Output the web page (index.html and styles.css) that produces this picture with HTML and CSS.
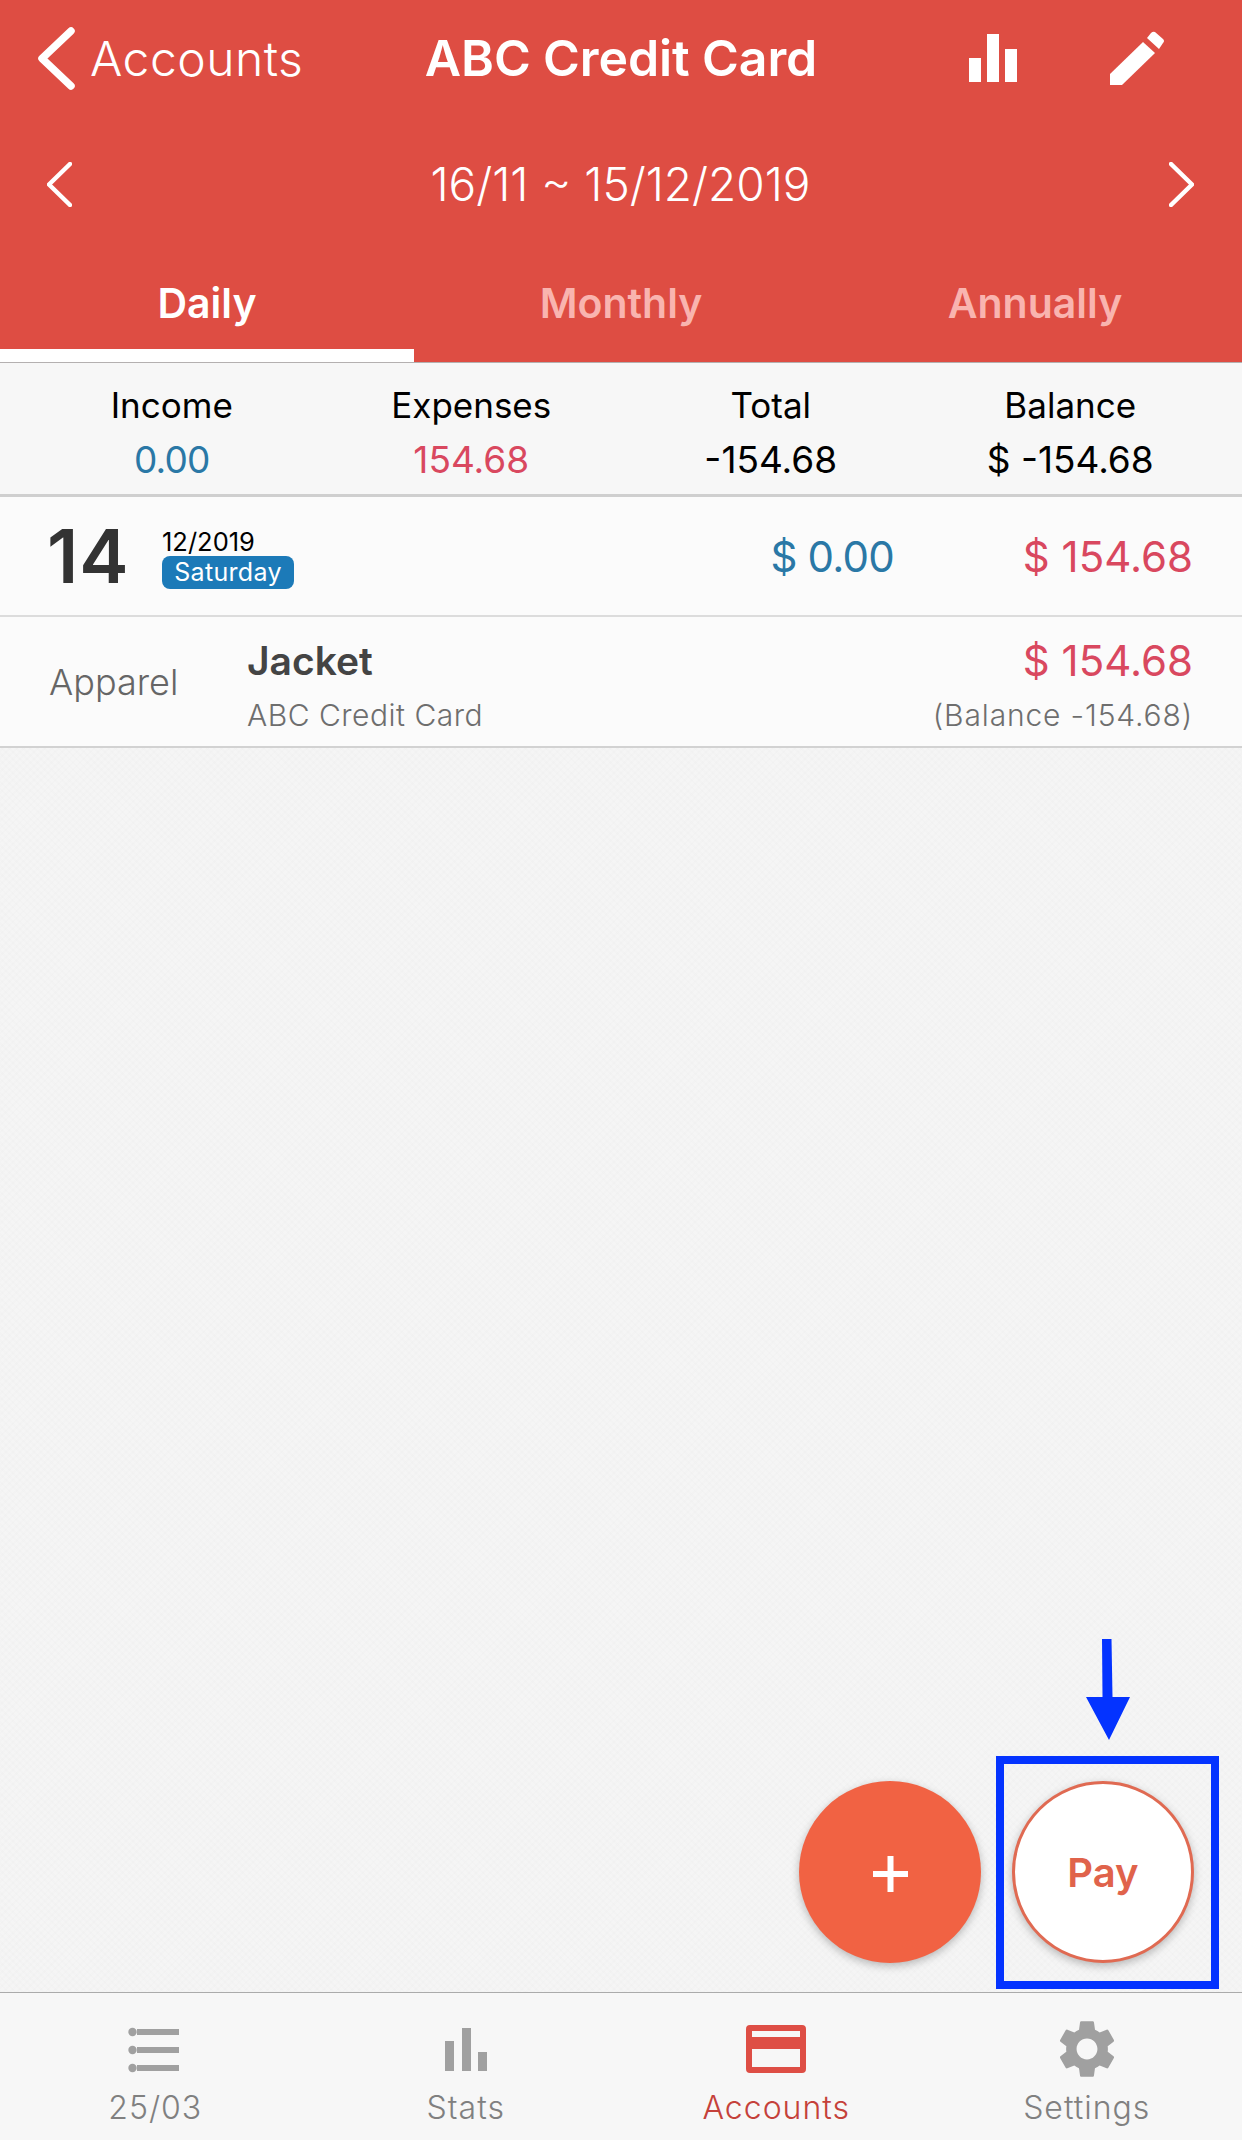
FILE: index.html
```html
<!DOCTYPE html>
<html lang="en">
<head>

    <meta charset="utf-8">

    <title>ABC Credit Card</title>

    <link rel="stylesheet" href="styles.css">

</head>
<body>

    <div class="screen">

        <header class="header">

            <div class="nav">
                <div class="nav_back">
                    <svg class="back_icon" viewBox="0 0 37 63"><path d="M33 4 L4 31.5 L33 59"/></svg>
                    <span>Accounts</span>
                </div>
                <div class="nav_title">ABC Credit Card</div>
                <div class="nav_actions">
                    <svg class="chart_icon" viewBox="0 0 48 48">
                        <rect x="0" y="24" width="12" height="24"/>
                        <rect x="18" y="0" width="12" height="48"/>
                        <rect x="36" y="15" width="12" height="33"/>
                    </svg>
                    <svg class="pencil_icon" viewBox="0 0 54 54">
                        <path d="M0 43 L33 11 L45 22 L12 54 L0 54 Z"/>
                        <path d="M37 7 L41 2 Q43 0 45 1 L53 8 Q55 10 53 12 L49 18 Z"/>
                    </svg>
                </div>
            </div>

            <div class="period">
                <svg class="period_icon" viewBox="0 0 25 45"><path d="M23 2 L2 22.5 L23 43"/></svg>
                <span>16/11 ~ 15/12/2019</span>
                <svg class="period_icon" viewBox="0 0 25 45"><path d="M2 2 L23 22.5 L2 43"/></svg>
            </div>

            <div class="tabs">
                <div class="tab tab_active">Daily</div>
                <div class="tab">Monthly</div>
                <div class="tab">Annually</div>
            </div>

        </header>

        <section class="summary">
            <div class="summary_col">
                <div>Income</div>
                <div class="summary_val summary_zero blue">0.00</div>
            </div>
            <div class="summary_col">
                <div>Expenses</div>
                <div class="summary_val red">154.68</div>
            </div>
            <div class="summary_col">
                <div>Total</div>
                <div class="summary_val">-154.68</div>
            </div>
            <div class="summary_col">
                <div>Balance</div>
                <div class="summary_val">$ -154.68</div>
            </div>
        </section>

        <section class="day">
            <div class="day_num">14</div>
            <div class="day_info">
                <div class="day_month">12/2019</div>
                <div class="day_name">Saturday</div>
            </div>
            <div class="day_income blue">$ 0.00</div>
            <div class="day_expense red">$ 154.68</div>
        </section>

        <section class="item">
            <div class="item_cat">Apparel</div>
            <div class="item_main">
                <div class="item_title">Jacket</div>
                <div class="item_sub">ABC Credit Card</div>
            </div>
            <div class="item_amounts">
                <div class="item_price red">$ 154.68</div>
                <div class="item_sub item_balance">(Balance -154.68)</div>
            </div>
        </section>

        <main class="empty"></main>

        <nav class="bottom">
            <div class="bottom_tab">
                <svg class="bottom_icon" viewBox="0 0 60 60">
                    <circle cx="7.5" cy="12" r="4.2"/>
                    <circle cx="7.5" cy="30" r="4.2"/>
                    <circle cx="7.5" cy="48" r="4.2"/>
                    <rect x="12" y="9" width="42" height="6"/>
                    <rect x="12" y="27" width="42" height="6"/>
                    <rect x="12" y="45" width="42" height="6"/>
                </svg>
                <span>25/03</span>
            </div>
            <div class="bottom_tab">
                <svg class="bottom_icon" viewBox="0 0 60 60">
                    <rect x="9" y="21" width="9" height="30"/>
                    <rect x="26" y="8" width="9" height="43"/>
                    <rect x="42" y="32" width="9" height="19"/>
                </svg>
                <span>Stats</span>
            </div>
            <div class="bottom_tab bottom_active">
                <svg class="bottom_icon" viewBox="0 0 60 60">
                    <path fill-rule="evenodd" d="M4 5 H56 Q60 5 60 9 V49 Q60 53 56 53 H4 Q0 53 0 49 V9 Q0 5 4 5 Z M6 11 V17 H54 V11 Z M6 29 V47 H54 V29 Z"/>
                </svg>
                <span>Accounts</span>
            </div>
            <div class="bottom_tab">
                <svg class="bottom_icon" viewBox="0 0 60 60">
                    <g transform="translate(-4.8 -5.8) scale(2.9)">
                        <path d="M19.14 12.94c.04-.3.06-.61.06-.94 0-.32-.02-.64-.07-.94l2.03-1.58c.18-.14.23-.41.12-.61l-1.92-3.32c-.12-.22-.37-.29-.59-.22l-2.39.96c-.5-.38-1.03-.7-1.62-.94l-.36-2.54c-.04-.24-.24-.41-.48-.41h-3.84c-.24 0-.43.17-.47.41l-.36 2.54c-.59.24-1.13.57-1.62.94l-2.39-.96c-.22-.08-.47 0-.59.22L2.74 8.87c-.12.21-.08.47.12.61l2.03 1.58c-.05.3-.09.63-.09.94s.02.64.07.94l-2.03 1.58c-.18.14-.23.41-.12.61l1.92 3.32c.12.22.37.29.59.22l2.39-.96c.5.38 1.03.7 1.62.94l.36 2.54c.05.24.24.41.48.41h3.84c.24 0 .44-.17.47-.41l.36-2.54c.59-.24 1.13-.56 1.62-.94l2.39.96c.22.08.47 0 .59-.22l1.92-3.32c.12-.22.07-.47-.12-.61l-2.01-1.58zM12 15.6c-1.98 0-3.6-1.62-3.6-3.6s1.62-3.6 3.6-3.6 3.6 1.62 3.6 3.6-1.62 3.6-3.6 3.6z"/>
                    </g>
                </svg>
                <span>Settings</span>
            </div>
        </nav>

        <!-- floating buttons -->
        <div class="fab fab_add">
            <svg class="plus_icon" viewBox="0 0 35 36">
                <rect x="0" y="15" width="35" height="6"/>
                <rect x="14.5" y="0" width="6" height="36"/>
            </svg>
        </div>
        <div class="fab fab_pay">Pay</div>

        <!-- blue annotation -->
        <div class="mark_box"></div>
        <svg class="mark_arrow" viewBox="0 0 44 101">
            <path d="M16 0 H25.5 L26.5 58 H44 L23 101 L0 58 H16.5 Z"/>
        </svg>

    </div>

</body>
</html>
```

FILE: styles.css
```css
html, body {
    margin: 0;
    width: 1242px;
    height: 2140px;
    overflow: hidden;
}
body {
    font-family: "Inter", "Liberation Sans", sans-serif;
    color: #000;
}
.screen {
    display: flex;
    flex-direction: column;
    position: relative;
    width: 1242px;
    height: 2140px;
    background: #f5f5f5;
}
.blue {
    color: #2a78a6;
}
.red {
    color: #d9485f;
}

/* header */
.header {
    height: 362px;
    background: #de4d43;
    color: #fff;
    border-bottom: 1px solid #b4b0b0;
}
.nav {
    display: grid;
    grid-template-columns: 1fr auto 1fr;
    align-items: center;
    height: 116px;
}
.nav_back {
    display: flex;
    align-items: center;
    gap: 15px;
    padding-left: 38px;
    font-size: 48px;
    font-weight: 300;
    letter-spacing: 0.5px;
}
.back_icon {
    width: 37px;
    height: 63px;
    fill: none;
    stroke: #fff;
    stroke-width: 7.5;
    stroke-linecap: round;
    stroke-linejoin: round;
}
.nav_title {
    font-size: 50px;
    font-weight: 600;
    letter-spacing: -0.1px;
}
.nav_actions {
    display: flex;
    justify-content: flex-end;
    align-items: center;
    gap: 93px;
    padding-right: 78px;
}
.chart_icon {
    width: 48px;
    height: 48px;
    fill: #fff;
}
.pencil_icon {
    width: 54px;
    height: 54px;
    fill: #fff;
}
.period {
    display: flex;
    justify-content: space-between;
    align-items: center;
    height: 136px;
    padding: 0 48px 0 47px;
    font-size: 46px;
    font-weight: 300;
}
.period_icon {
    width: 25px;
    height: 45px;
    fill: none;
    stroke: #fff;
    stroke-width: 4.5;
    stroke-linecap: round;
    stroke-linejoin: round;
}
.tabs {
    display: grid;
    grid-template-columns: repeat(3, 1fr);
    height: 110px;
}
.tab {
    display: flex;
    justify-content: center;
    align-items: center;
    padding-top: 5px;
    border-bottom: 13px solid transparent;
    box-sizing: border-box;
    font-size: 41px;
    font-weight: 600;
    color: #f9b4af;
}
.tab_active {
    color: #fff;
    border-bottom-color: #fff;
}

/* totals */
.summary {
    display: grid;
    grid-template-columns: repeat(4, 1fr);
    height: 123px;
    padding: 8px 22px 0;
    background: #f7f7f7;
    border-bottom: 3px solid #cfcfcf;
    box-sizing: content-box;
}
.summary_col {
    display: flex;
    flex-direction: column;
    justify-content: center;
    gap: 11px;
    text-align: center;
    font-size: 35px;
    line-height: 43px;
}
.summary_val {
    font-size: 37px;
}
.summary_zero {
    letter-spacing: -0.8px;
}

/* day header */
.day {
    display: flex;
    align-items: center;
    height: 118px;
    padding: 0 49px 0 47px;
    background: #fbfbfb;
    border-bottom: 2px solid #dcdcdc;
}
.day_num {
    width: 115px;
    font-size: 74px;
    font-weight: 600;
    letter-spacing: 1px;
    color: #333;
}
.day_info {
    flex: 1;
    display: flex;
    flex-direction: column;
    align-items: flex-start;
    margin-top: 5px;
}
.day_month {
    font-size: 25.5px;
    line-height: 28px;
}
.day_name {
    width: 132px;
    height: 33px;
    border-radius: 8px;
    background: #1c7ab8;
    color: #fff;
    font-size: 25px;
    line-height: 33px;
    text-align: center;
    letter-spacing: 0.3px;
}
.day_income {
    font-size: 42px;
    letter-spacing: -0.8px;
}
.day_expense {
    margin-left: 129px;
    font-size: 42px;
}

/* transaction row */
.item {
    display: flex;
    align-items: center;
    height: 129px;
    padding: 0 49px;
    background: #fbfbfb;
    border-bottom: 2px solid #d2d2d2;
}
.item_cat {
    width: 198px;
    font-size: 36px;
    font-weight: 300;
    color: #666;
}
.item_main {
    flex: 1;
    margin-top: 5px;
}
.item_title {
    font-size: 39px;
    line-height: 56px;
    font-weight: 600;
    color: #444;
}
.item_sub {
    font-size: 30px;
    line-height: 42px;
    margin-top: 5px;
    letter-spacing: 0.5px;
    font-weight: 300;
    color: #6e6e6e;
}
.item_balance {
    letter-spacing: 0.85px;
}
.item_amounts {
    margin-top: 5px;
    text-align: right;
}
.item_price {
    font-size: 42px;
    line-height: 56px;
}

/* empty list area, faint paper look */
.empty {
    flex: 1;
    background:
        repeating-linear-gradient(45deg, rgba(0,0,0,0.006) 0 2px, transparent 2px 5px),
        repeating-linear-gradient(-45deg, rgba(0,0,0,0.006) 0 2px, transparent 2px 5px),
        #f5f5f5;
}

/* bottom bar */
.bottom {
    display: grid;
    grid-template-columns: repeat(4, 1fr);
    height: 147px;
    background: #f7f7f7;
    border-top: 1px solid #ababab;
}
.bottom_tab {
    display: flex;
    flex-direction: column;
    align-items: center;
    padding-top: 27px;
    font-size: 32px;
    font-weight: 300;
    letter-spacing: 1px;
    color: #808080;
    fill: #a0a0a0;
}
.bottom_tab span {
    line-height: 40px;
    margin-top: 8px;
}
.bottom_icon {
    width: 60px;
    height: 60px;
}
.bottom_active {
    color: #c5413a;
    fill: #de4e45;
}

/* floating buttons */
.fab {
    position: absolute;
    top: 1781px;
    display: flex;
    justify-content: center;
    align-items: center;
    width: 182px;
    height: 182px;
    border-radius: 50%;
    box-sizing: border-box;
    box-shadow: 0 3px 8px 0 rgba(0,0,0,0.25);
}
.fab_add {
    left: 799px;
    background: #f16243;
}
.plus_icon {
    width: 35px;
    height: 36px;
    margin-top: 3px;
    fill: #fff;
}
.fab_pay {
    left: 1012px;
    background: #fff;
    border: 3px solid #e06a52;
    font-size: 40px;
    font-weight: 600;
    color: #e0634b;
}

/* annotation */
.mark_box {
    position: absolute;
    left: 996px;
    top: 1756px;
    width: 223px;
    height: 233px;
    border: 8px solid #0433ff;
    box-sizing: border-box;
}
.mark_arrow {
    position: absolute;
    left: 1086px;
    top: 1639px;
    width: 44px;
    height: 101px;
    fill: #0433ff;
}
```
